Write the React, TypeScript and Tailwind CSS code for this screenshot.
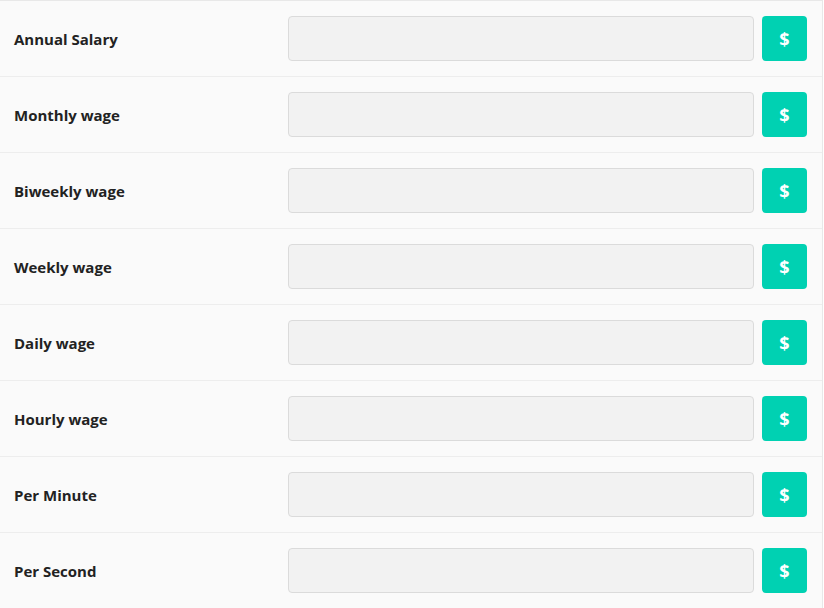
import React from "react";

const rows = [
  "Annual Salary",
  "Monthly wage",
  "Biweekly wage",
  "Weekly wage",
  "Daily wage",
  "Hourly wage",
  "Per Minute",
  "Per Second",
];

export default function App() {
  return (
    <div
      className="w-[823px] h-[608px] bg-[#fafafa] border-t border-r border-[#e8e8e8] overflow-hidden"
      style={{ fontFamily: '"Open Sans", "Noto Sans", sans-serif' }}
    >
      {rows.map((label) => (
        <div
          key={label}
          className="h-[76px] flex items-center border-b border-[#ededed] pl-[14px] pr-[15px]"
        >
          <div className="w-[274px] mt-[2px] text-[15px] font-bold text-[#222]">{label}</div>
          <div className="flex-1 h-[45px] bg-[#f2f2f2] border border-[#dbdbdb] rounded-[4px]" />
          <button className="ml-[8px] w-[45px] h-[45px] bg-[#00d1b2] rounded-[4px] text-white font-bold text-[18px] leading-none flex items-center justify-center">
            $
          </button>
        </div>
      ))}
    </div>
  );
}
